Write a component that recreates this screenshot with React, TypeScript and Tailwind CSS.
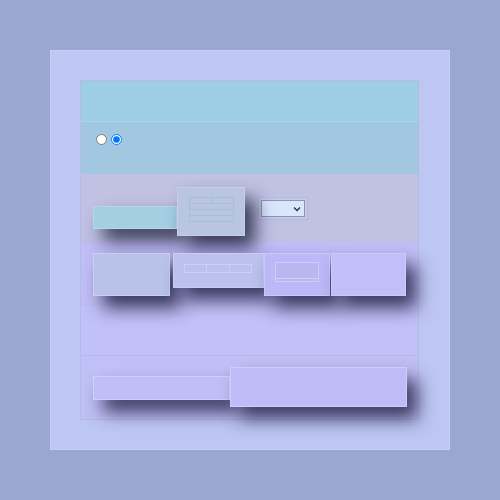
import React from "react";

const sh = "relative z-10 shadow-[10px_12px_18px_rgba(22,22,58,0.8)]";

export default function App() {
  return (
    <div className="w-[500px] h-[500px] bg-[#9aa7cf] flex items-start justify-start p-[50px]" style={{ fontFamily: "'Liberation Sans', sans-serif" }}>
      <div className="w-[400px] h-[400px] bg-[#bec6f3] border border-[#c8cff6] pt-[29px] pl-[29px]">
        <div className="w-[339px] flex flex-col border border-[#b2bce8]">
          {/* row 1 */}
          <div className="h-[41px] bg-[#9dcee4] border-b border-[#a9d4e8]" />
          {/* row 2 */}
          <div className="h-[52px] bg-[#a1c8e0] border-b border-[#a7c6de] flex items-start gap-[4px] pt-[12px] pl-[15px]">
            <input type="radio" name="r" className="m-0 w-[11px] h-[11px]" readOnly />
            <input type="radio" name="r" className="m-0 w-[11px] h-[11px]" defaultChecked readOnly />
          </div>
          {/* row 3 */}
          <div className="h-[68px] bg-[#c1c1e4] border-b border-[#bfbde6] flex items-start pl-[12px]">
            <div className={`mt-[32px] w-[84px] h-[23px] bg-[#a4cee2] border border-[#b6d8e6] ${sh}`} />
            <div className={`mt-[13px] w-[68px] h-[49px] bg-[#b9c5e2] border border-[#c6cfe8] ${sh} pt-[9px] pl-[11px]`}>
              <div className="w-[45px] h-[25px] border border-[#a6bfd8] flex flex-col">
                <div className="h-[6px] flex border-b border-[#a6bfd8]">
                  <div className="flex-1 border-r border-[#a6bfd8]" />
                  <div className="flex-1" />
                </div>
                <div className="h-[6px] border-b border-[#a6bfd8]" />
                <div className="h-[6px] border-b border-[#a6bfd8]" />
              </div>
            </div>
            <div className="mt-[23px] ml-[13px] p-[2px] border border-[#b1bddb] bg-[#c2c8e6]">
              <div className="w-[44px] h-[17px] bg-[#d9e6fc] border border-[#8f97ad] flex items-center justify-end pr-[3px]">
                <svg width="8" height="6" viewBox="0 0 8 6"><path d="M1 1.5 L4 4.5 L7 1.5" stroke="#333" strokeWidth="1.4" fill="none" /></svg>
              </div>
            </div>
          </div>
          {/* row 4 */}
          <div className="h-[66px] bg-[#c1bdf6] border-b border-[#c7c4f4] flex items-start pl-[12px] pt-[11px]">
            <div className={`w-[77px] h-[43px] bg-[#b9c2e8] border border-[#c9cfee] ${sh}`} />
            <div className={`ml-[3px] w-[91px] h-[35px] bg-[#bcc1ee] border border-[#cacdf2] ${sh} pt-[10px] pl-[10px]`}>
              <div className="w-[68px] h-[9px] border border-[#cdcff4] flex">
                <div className="flex-1 border-r border-[#cdcff4]" />
                <div className="flex-1 border-r border-[#cdcff4]" />
                <div className="flex-1" />
              </div>
            </div>
            <div className={`w-[66px] h-[43px] bg-[#bdb9f8] border border-[#cbc9fa] ${sh} pt-[8px] pl-[10px]`}>
              <div className="w-[44px] h-[20px] border border-[#cfcdf7] bg-[#b9b6f0] flex flex-col justify-end">
                <div className="h-[3px] border-t border-[#d2d0f8]" />
              </div>
            </div>
            <div className={`ml-[1px] w-[75px] h-[43px] bg-[#c1befa] border border-[#cccbf8] ${sh}`} />
          </div>
          {/* row 5 */}
          <div className="h-[48px] bg-[#c1c0f8] border-b border-[#b8b8ea]" />
          {/* row 6 */}
          <div className="h-[63px] bg-[#c1c0f6] flex items-start pl-[12px]">
            <div className={`mt-[20px] w-[137px] h-[24px] bg-[#bfbef7] border border-[#cfcff8] ${sh}`} />
            <div className={`mt-[11px] w-[177px] h-[40px] bg-[#bebcf8] border border-[#cfcdf9] ${sh}`} />
          </div>
        </div>
      </div>
    </div>
  );
}
